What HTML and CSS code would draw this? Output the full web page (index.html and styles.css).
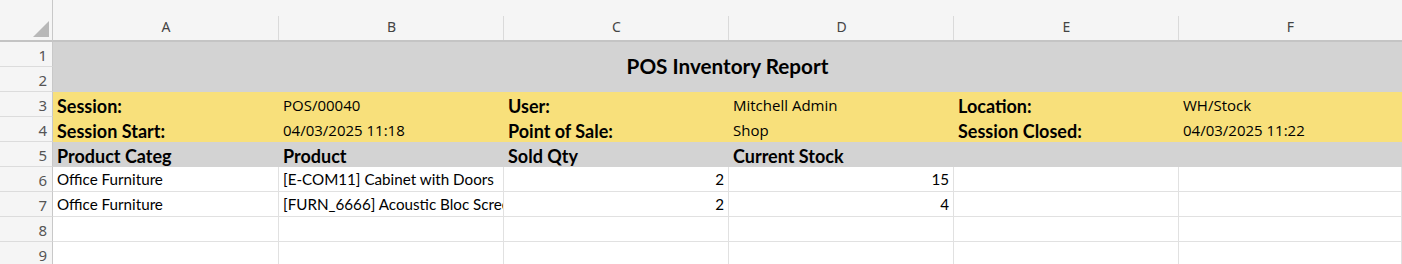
FILE: index.html
```html
<!DOCTYPE html>
<html>
<head>
<meta charset="utf-8">
<link rel="stylesheet" href="styles.css">
</head>
<body>
<div class="sheet">
  <div class="corner"><span class="tri"></span></div>
  <div class="colhead">A</div>
  <div class="colhead">B</div>
  <div class="colhead">C</div>
  <div class="colhead">D</div>
  <div class="colhead">E</div>
  <div class="colhead last">F</div>

  <div class="rowhead r1">1</div>
  <div class="title">POS Inventory Report</div>
  <div class="rowhead r2">2</div>

  <div class="rowhead">3</div>
  <div class="c yellow lbl">Session:</div>
  <div class="c yellow val">POS/00040</div>
  <div class="c yellow lbl">User:</div>
  <div class="c yellow val">Mitchell Admin</div>
  <div class="c yellow lbl">Location:</div>
  <div class="c yellow val">WH/Stock</div>

  <div class="rowhead">4</div>
  <div class="c yellow lbl">Session Start:</div>
  <div class="c yellow val">04/03/2025 11:18</div>
  <div class="c yellow lbl">Point of Sale:</div>
  <div class="c yellow val">Shop</div>
  <div class="c yellow lbl">Session Closed:</div>
  <div class="c yellow val">04/03/2025 11:22</div>

  <div class="rowhead">5</div>
  <div class="c grey lbl">Product Categ</div>
  <div class="c grey lbl">Product</div>
  <div class="c grey lbl">Sold Qty</div>
  <div class="c grey lbl">Current Stock</div>
  <div class="c grey"></div>
  <div class="c grey"></div>

  <div class="rowhead">6</div>
  <div class="c d">Office Furniture</div>
  <div class="c d">[E-COM11] Cabinet with Doors</div>
  <div class="c d num">2</div>
  <div class="c d num">15</div>
  <div class="c d"></div>
  <div class="c d"></div>

  <div class="rowhead">7</div>
  <div class="c d">Office Furniture</div>
  <div class="c d">[FURN_6666] Acoustic Bloc Screens</div>
  <div class="c d num">2</div>
  <div class="c d num">4</div>
  <div class="c d"></div>
  <div class="c d"></div>

  <div class="rowhead">8</div>
  <div class="c d"></div>
  <div class="c d"></div>
  <div class="c d"></div>
  <div class="c d"></div>
  <div class="c d"></div>
  <div class="c d"></div>

  <div class="rowhead">9</div>
  <div class="c d"></div>
  <div class="c d"></div>
  <div class="c d"></div>
  <div class="c d"></div>
  <div class="c d"></div>
  <div class="c d"></div>
</div>
</body>
</html>
```
FILE: styles.css
```css
html, body {
  margin: 0;
  padding: 0;
  background: #ffffff;
  overflow: hidden;
}
.sheet {
  display: grid;
  grid-template-columns: 53px 226px 225px 225px 225px 225px 1fr;
  grid-template-rows: 42px repeat(9, 25px);
  width: 1402px;
  font-family: Lato, "Liberation Sans", sans-serif;
  color: #000;
}
.corner {
  position: relative;
  background: #f5f5f5;
  border-right: 1px solid #c8c8c8;
  border-bottom: 2px solid #c4c4c4;
  box-sizing: border-box;
}
.corner .tri {
  position: absolute;
  right: 3px;
  bottom: 3px;
  width: 0;
  height: 0;
  border-left: 16px solid transparent;
  border-bottom: 16px solid #b8b8b8;
}
.colhead {
  position: relative;
  background: #f5f5f5;
  border-bottom: 2px solid #c4c4c4;
  box-sizing: border-box;
  display: flex;
  align-items: flex-end;
  justify-content: center;
  padding-bottom: 4px;
  font-family: "Noto Sans", "Open Sans", sans-serif;
  font-size: 14px;
  line-height: 18px;
  color: #444;
}
.colhead::after {
  content: "";
  position: absolute;
  right: 0;
  top: 16px;
  bottom: 0;
  width: 1px;
  background: #dadada;
}
.colhead.last::after { display: none; }
.rowhead {
  background: #f5f5f5;
  border-right: 1px solid #c8c8c8;
  border-bottom: 1px solid #dcdcdc;
  box-sizing: border-box;
  display: flex;
  align-items: flex-end;
  justify-content: flex-end;
  padding-right: 5px;
  padding-bottom: 2px;
  font-family: "Noto Sans", "Open Sans", sans-serif;
  font-size: 15px;
  line-height: 18px;
  color: #555;
}
.title {
  grid-column: 2 / 8;
  grid-row: 2 / 4;
  background: #d3d3d3;
  display: flex;
  align-items: center;
  justify-content: center;
  font-weight: 700;
  font-size: 20.7px;
  padding-bottom: 2px;
  box-sizing: border-box;
}
.c {
  box-sizing: border-box;
  display: flex;
  align-items: flex-end;
  padding: 0 4px 3px 4px;
  white-space: nowrap;
  overflow: hidden;
  line-height: 18px;
}
.yellow { background: #f8e07b; }
.grey { background: #d3d3d3; }
.lbl {
  font-weight: 700;
  font-size: 18px;
  padding-bottom: 2px;
}
.val {
  font-family: "Open Sans", "Noto Sans", sans-serif;
  font-size: 15px;
  padding-bottom: 3px;
}
.d {
  font-size: 15.2px;
  border-right: 1px solid #e1e1e1;
  border-bottom: 1px solid #e1e1e1;
}
.num {
  justify-content: flex-end;
}
```
